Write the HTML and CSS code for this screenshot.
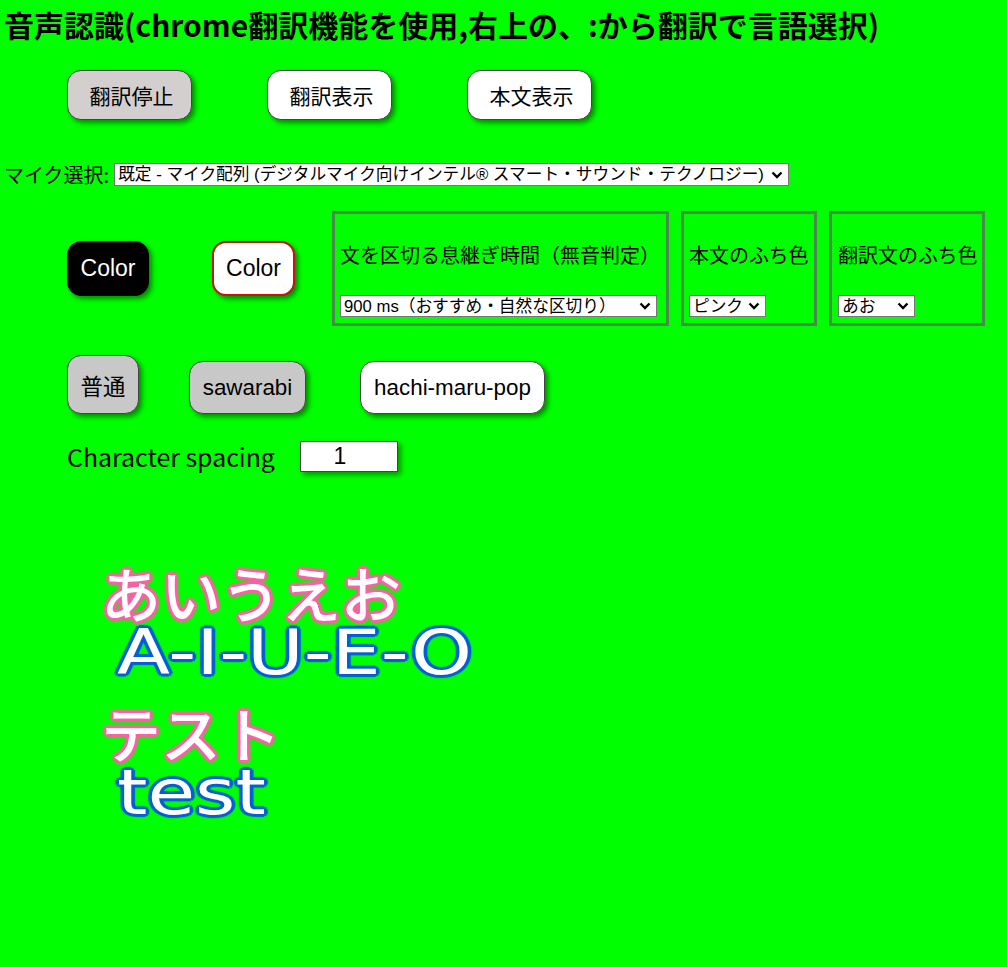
FILE: index.html
```html
<!DOCTYPE html>
<html lang="ja">
<head>
<meta charset="utf-8">
<title>音声認識</title>
<link rel="stylesheet" href="styles.css">
</head>
<body>
<h1 class="title">音声認識(chrome翻訳機能を使用,右上の、:から翻訳で言語選択)</h1>
<div class="row row-translate">
  <button class="btn btn-serif btn-on">翻訳停止</button>
  <button class="btn btn-serif">翻訳表示</button>
  <button class="btn btn-serif">本文表示</button>
</div>
<div class="mic">
  <label class="mic-label">マイク選択:</label>
  <select class="mic-select"><option>既定 - マイク配列 (デジタルマイク向けインテル® スマート・サウンド・テクノロジー)</option></select>
</div>
<div class="row row-color">
  <button class="btn btn-color btn-black">Color</button>
  <button class="btn btn-color btn-red">Color</button>
  <div class="boxes">
    <div class="box box-pause">
      <div class="box-label">文を区切る息継ぎ時間（無音判定）</div>
      <select class="box-select sel-pause"><option>900 ms（おすすめ・自然な区切り）</option></select>
    </div>
    <div class="box box-body">
      <div class="box-label">本文のふち色</div>
      <select class="box-select"><option>ピンク</option></select>
    </div>
    <div class="box box-trans">
      <div class="box-label">翻訳文のふち色</div>
      <select class="box-select"><option>あお</option><option>ピンク</option></select>
    </div>
  </div>
</div>
<div class="row row-font">
  <button class="btn btn-font btn-tall btn-grey">普通</button>
  <button class="btn btn-font btn-grey">sawarabi</button>
  <button class="btn btn-font">hachi-maru-pop</button>
</div>
<div class="row row-spacing">
  <span class="spacing-label">Character spacing</span>
  <input class="spacing-input" type="text" value="1">
</div>
<div class="subs">
  <div class="pair">
    <div class="sub sub-jp">あいうえお</div>
    <div class="sub sub-en"><span class="sub-wide">A-I-U-E-O</span></div>
  </div>
  <div class="pair pair-2">
    <div class="sub sub-jp">テスト</div>
    <div class="sub sub-en"><span class="sub-wide">test</span></div>
  </div>
</div>
</body>
</html>
```
FILE: styles.css
```css
* { box-sizing: border-box; }
html, body { height: 100%; }
body {
  margin: 0;
  background: #00ff00;
  color: #000;
  font-family: "Liberation Sans", "Noto Sans CJK JP", sans-serif;
  overflow: hidden;
}
.title {
  margin: 0;
  padding: 4px 0 0 4px;
  height: 70px;
  font: 700 30px/40px "Noto Sans CJK JP", sans-serif;
  white-space: nowrap;
}
.row { display: flex; padding-left: 67px; }
.btn {
  border: 1px solid #444;
  border-radius: 14px;
  background: #fff;
  color: #000;
  padding: 0;
  box-shadow: 3px 3px 5px rgba(0, 0, 0, .45);
}
.btn-serif {
  width: 125px;
  height: 50px;
  padding-left: 4px;
  font: 21px "Liberation Serif", "Noto Sans CJK JP", serif;
}
.btn-on { background: #d3cfcf; }
.row-translate { gap: 75px; height: 93px; }
.mic { display: flex; align-items: center; height: 23px; padding-left: 4px; }
.mic-label { font: 20px/23px "Noto Sans CJK JP", sans-serif; margin-right: 5px; white-space: nowrap; }
.mic-select, .box-select {
  appearance: none;
  -webkit-appearance: none;
  height: 23px;
  padding: 0 3px;
  font: 16.7px "Liberation Sans", "Noto Sans CJK JP", sans-serif;
  color: #000;
  background: #fff url("data:image/svg+xml,%3Csvg xmlns='http://www.w3.org/2000/svg' width='12' height='8' viewBox='0 0 12 8'%3E%3Cpath d='M1.5 1.5 6 6l4.5-4.5' fill='none' stroke='%23000' stroke-width='2.4'/%3E%3C/svg%3E") no-repeat right 5px center;
  border: 1px solid #767676;
  border-radius: 0;
}
.mic-select { width: 675px; }
.row-color { height: 169px; padding-top: 25px; align-items: flex-start; }
.btn-color {
  width: 82px;
  height: 55px;
  margin-top: 30px;
  font: 23px "Liberation Sans", sans-serif;
}
.btn-black { background: #000; color: #fff; border-color: #000; margin-right: 63px; }
.btn-red { width: 83px; border: 2px solid #d01010; margin-right: 37px; }
.boxes { display: flex; gap: 12px; }
.box {
  border: 3px solid #4a8a4a;
  height: 115px;
  padding: 0 5px;
  display: flex;
  flex-direction: column;
}
.box-pause { width: 337px; }
.box-body { width: 136px; }
.box-trans { width: 156px; padding-left: 6px; }
.box-label {
  font: 20px/27px "Noto Sans CJK JP", sans-serif;
  margin-top: 27px;
  height: 54px;
  white-space: nowrap;
}
.box-select { width: 77px; height: 22px; }
.sel-pause { width: 317px; }
.row-font { height: 59px; align-items: flex-end; }
.btn-font { height: 53px; font: 22.4px "Liberation Sans", "Noto Sans CJK JP", sans-serif; }
.btn-tall { height: 59px; width: 72px; margin-right: 50px; }
.btn-grey { background: #c8c8c8; }
.btn-font:nth-child(2) { width: 117px; margin-right: 54px; }
.btn-font:nth-child(3) { width: 185px; }
.row-spacing { margin-top: 27px; align-items: center; height: 31px; }
.spacing-label {
  font: 24.9px/31px "Noto Sans CJK JP", sans-serif;
  width: 233px;
  white-space: nowrap;
}
.spacing-input {
  width: 98px;
  height: 31px;
  padding: 0 18px 0 0;
  text-align: center;
  font: 23px "Liberation Sans", sans-serif;
  border: 1px solid #444;
  background: #fff;
  box-shadow: 3px 3px 5px rgba(0, 0, 0, .4);
  border-radius: 0;
}
.subs { padding: 85px 0 0 101px; }
.sub { color: #fff; white-space: nowrap; }
.sub-jp {
  font: 500 60px/70px "Noto Sans CJK JP", sans-serif;
  height: 62px;
  text-shadow: 0 0 3px #ff5fa8, 2px 2px 2px #ff5fa8, -2px -2px 2px #ff5fa8, 2px -2px 2px #ff5fa8, -2px 2px 2px #ff5fa8, 0 3px 2px #ff5fa8, 0 -3px 2px #ff5fa8, 3px 0 2px #ff5fa8, -3px 0 2px #ff5fa8;
}
.sub-en {
  font: 400 62px/62px "DejaVu Sans", sans-serif;
  padding: 3px 0 0 16px;
  height: 62px;
  text-shadow: 0 0 2px #0060d8, 2px 2px 1px #0060d8, -2px -2px 1px #0060d8, 2px -2px 1px #0060d8, -2px 2px 1px #0060d8, 0 3px 1px #0060d8, 0 -3px 1px #0060d8, 3px 0 1px #0060d8, -3px 0 1px #0060d8;
}
.sub-wide { display: inline-block; transform: scaleX(1.25); transform-origin: left center; }
.pair-2 { margin-top: 16px; }
```
